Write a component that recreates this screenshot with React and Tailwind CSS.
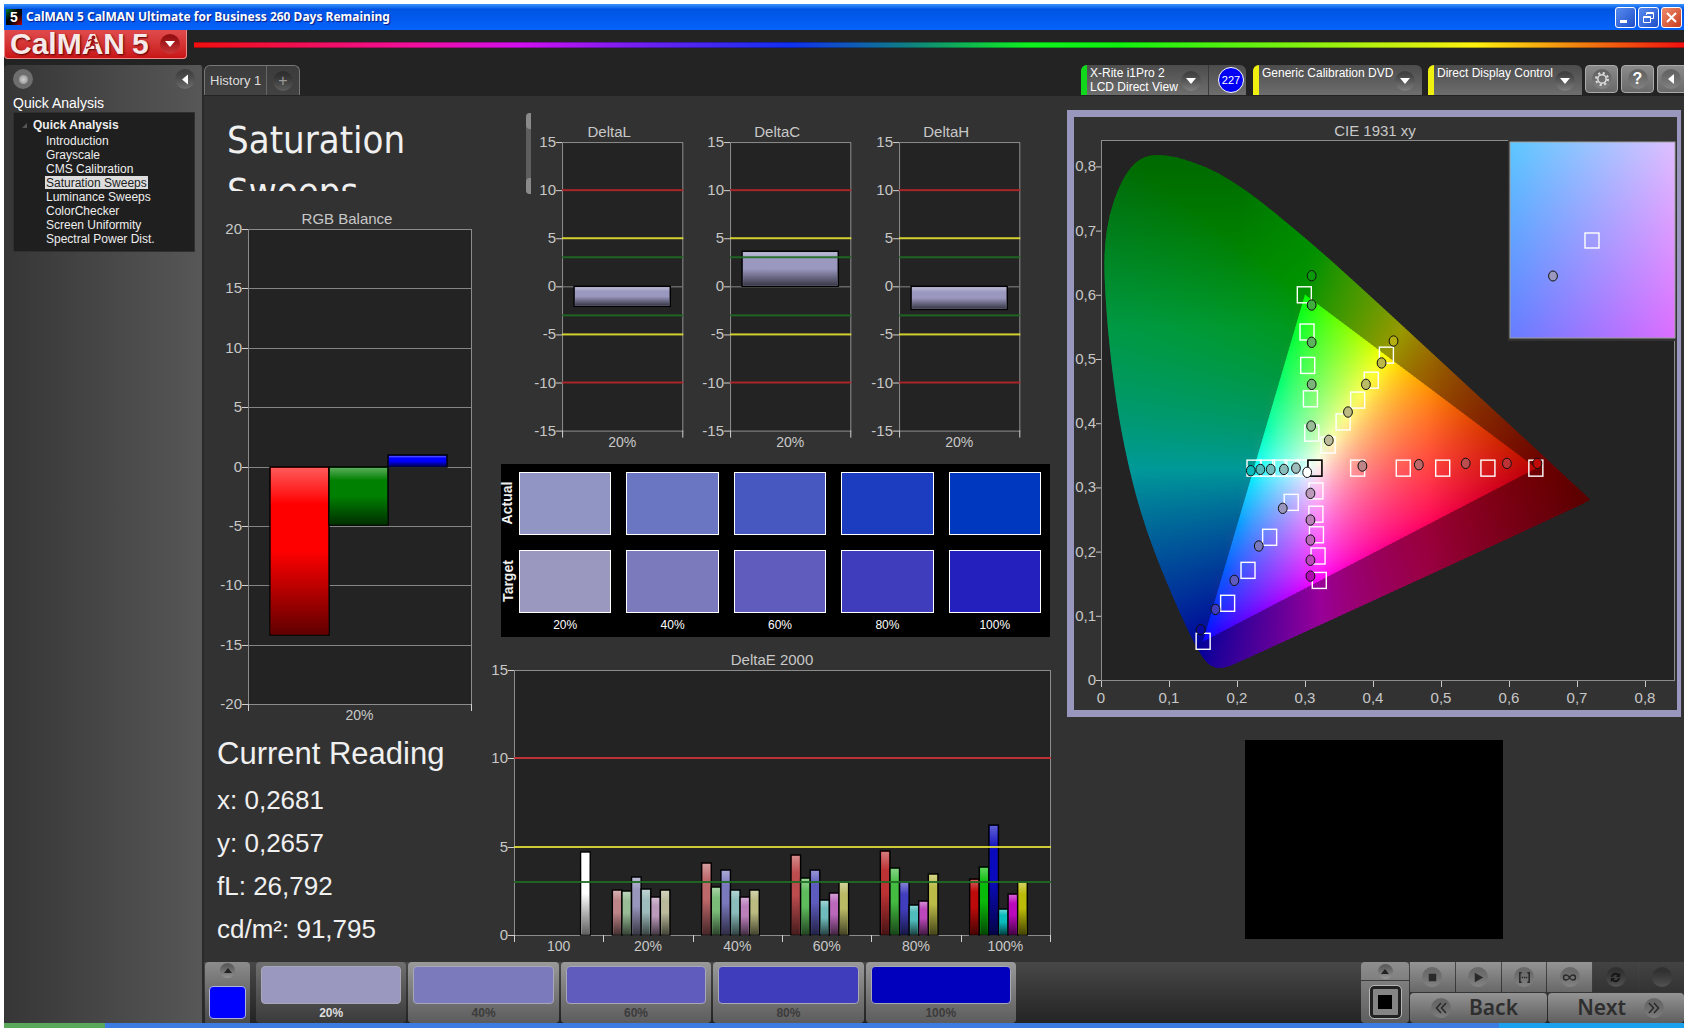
import { useMemo } from 'react'

const steps = ['20%', '40%', '60%', '80%', '100%']
const treeItems = [
  'Introduction', 'Grayscale', 'CMS Calibration', 'Saturation Sweeps',
  'Luminance Sweeps', 'ColorChecker', 'Screen Uniformity', 'Spectral Power Dist.',
]
const actual = ['bg-[#9095c3]', 'bg-[#6b76c3]', 'bg-[#4759c1]', 'bg-[#1c3dc0]', 'bg-[#0038bf]']
const target = ['bg-[#9a98bf]', 'bg-[#7b7abd]', 'bg-[#5f5cbd]', 'bg-[#403dbd]', 'bg-[#2320bd]']
const readings = ['x: 0,2681', 'y: 0,2657', 'fL: 26,792', 'cd/m²: 91,795']

const deltaLimits = [
  [10, '#b8262a', 2], [5, '#e6e233', 2], [3, '#1f6b22', 2],
  [-3, '#1f6b22', 2], [-5, '#e6e233', 2], [-10, '#b8262a', 2],
]

// red, green, blue, cyan, magenta, yellow, white
const deltaE = [
  { label: '100', bars: [null, null, null, null, null, null, [4.7, '#ffffff']] },
  { label: '20%', bars: [[2.54, '#bd8587'], [2.48, '#98bc96'], [3.27, '#9896bd'], [2.63, '#9fbcbc'], [2.16, '#bb9abb'], [2.54, '#bbbb9c']] },
  { label: '40%', bars: [[4.1, '#bd686a'], [2.7, '#7bbc79'], [3.7, '#7b79bd'], [2.54, '#8abcbc'], [2.16, '#bb80bb'], [2.54, '#bbbb82']] },
  { label: '60%', bars: [[4.53, '#bd4c4e'], [3.2, '#5fbc5d'], [3.7, '#5d5bbd'], [2, '#70bcbc'], [2.4, '#bb68bb'], [3, '#bbbb66']] },
  { label: '80%', bars: [[4.76, '#bd3234'], [3.78, '#43bc41'], [3, '#403ebd'], [1.67, '#50bcbc'], [1.9, '#bb48bb'], [3.46, '#bbbb48']] },
  { label: '100%', bars: [[3.16, '#bd0a0a'], [3.87, '#0abc0a'], [6.22, '#0a0abd'], [1.5, '#0abcbc'], [2.3, '#bb0abb'], [3, '#bbbb0a']] },
]

const squares = [
  [0.299, 0.6], [0.303, 0.542], [0.304, 0.49], [0.308, 0.438], [0.31, 0.3845],
  [0.4197, 0.506], [0.3974, 0.467], [0.3774, 0.436], [0.356, 0.402], [0.334, 0.366],
  [0.225, 0.33], [0.245, 0.33], [0.263, 0.33], [0.281, 0.33], [0.297, 0.33],
  [0.3774, 0.33], [0.4445, 0.33], [0.5025, 0.33], [0.569, 0.33], [0.6395, 0.33],
  [0.2797, 0.2767], [0.248, 0.2223], [0.2162, 0.1708], [0.1862, 0.1195], [0.1502, 0.0603],
  [0.316, 0.2945], [0.316, 0.2583], [0.3168, 0.2262], [0.3192, 0.1931], [0.321, 0.1551],
]

const circles = [
  [0.3098, 0.6297, '#0b9a0b'], [0.3098, 0.5841, '#3fae3f'], [0.3098, 0.526, '#5db35d'], [0.3098, 0.4605, '#7bb37b'], [0.309, 0.3956, '#98bc96'],
  [0.4302, 0.528, '#b5b010'], [0.4126, 0.4938, '#bbb848'], [0.3896, 0.4605, '#bbbb66'], [0.3632, 0.4174, '#bbbb82'], [0.335, 0.3733, '#bbbb9c'],
  [0.2203, 0.326, '#0abcbc'], [0.2343, 0.328, '#50bcbc'], [0.2496, 0.328, '#70bcbc'], [0.269, 0.328, '#8abcbc'], [0.2867, 0.33, '#9fbcbc'],
  [0.3844, 0.3333, '#bd8587'], [0.4674, 0.3354, '#bd686a'], [0.5363, 0.3374, '#bd4c4e'], [0.5969, 0.3374, '#bd3234'], [0.6417, 0.3374, '#c00a0a'],
  [0.308, 0.2907, '#bb9abb'], [0.308, 0.2492, '#bb80bb'], [0.308, 0.218, '#bb68bb'], [0.308, 0.1866, '#bb48bb'], [0.308, 0.1618, '#b00ab0'],
  [0.2673, 0.2674, '#9896bd'], [0.232, 0.2087, '#7b79bd'], [0.1961, 0.1552, '#5d5bbd'], [0.1684, 0.11, '#403ebd'], [0.1466, 0.0784, '#0a0aa0'],
  [0.3032, 0.3235, '#ffffff'],
]

const locus = [
  [0.178, 0.018], [0.16, 0.021], [0.145, 0.042], [0.1241, 0.085], [0.0913, 0.165], [0.066, 0.235],
  [0.0454, 0.31], [0.0255, 0.41], [0.012, 0.52], [0.005, 0.62], [0.005, 0.675], [0.012, 0.725],
  [0.027, 0.77], [0.044, 0.8], [0.064, 0.816], [0.087, 0.818], [0.112, 0.814], [0.1547, 0.8],
  [0.1929, 0.777], [0.2296, 0.75], [0.3016, 0.688], [0.3731, 0.62], [0.4441, 0.551], [0.5125, 0.484],
  [0.5752, 0.423], [0.627, 0.372], [0.6658, 0.334], [0.7, 0.3], [0.719, 0.282], [0.719, 0.28], [0.7, 0.27],
  [0.2, 0.026],
]

const px = (x) => 27 + x * 680
const py = (y) => 563 - y * 642
const clamp = (v) => Math.max(0, Math.min(1, v))

const R = [0.64, 0.33]
const G = [0.3, 0.6]
const B = [0.15, 0.06]

// curve through the midpoints of the locus, the points are the handles
function smooth(points) {
  const p = points.map(([x, y]) => [px(x), py(y)])
  const mid = (a, b) => `${((a[0] + b[0]) / 2).toFixed(1)} ${((a[1] + b[1]) / 2).toFixed(1)}`
  const n = p.length
  let d = 'M' + mid(p[n - 1], p[0])
  p.forEach((pt, i) => { d += `Q${pt[0].toFixed(1)} ${pt[1].toFixed(1)} ${mid(pt, p[(i + 1) % n])}` })
  return d + 'Z'
}

// chromaticity to display colour, brightest channel at full
function xyColor(x, y, inside) {
  const X = x / y
  const Z = (1 - x - y) / y
  const lin = [
    3.2406 * X - 1.5372 - 0.4986 * Z,
    -0.9689 * X + 1.8758 + 0.0415 * Z,
    0.0557 * X - 0.204 + 1.057 * Z,
  ].map((v) => Math.max(0, v))
  const max = Math.max(...lin)
  let f = 1 - 0.42 * clamp((x - 0.48) / 0.24)
  if (!inside) f *= 0.6 * (1 - 0.3 * clamp((y - 0.55) / 0.25) * clamp((0.4 - x) / 0.2))
  return lin.map((v) => Math.round(255 * f * Math.pow(v / max, 1 / 1.35)))
}

function Gamut({ id, inside }) {
  const rows = useMemo(() => {
    const list = []
    for (let top = 36; top < 554; top += 2) {
      const y = (563 - top - 1) / 642
      const stops = []
      for (let i = 0; i <= 36; i++) {
        const c = xyColor(0.001 + i * 0.02, y, inside)
        stops.push([i / 36, `rgb(${c[0]},${c[1]},${c[2]})`])
      }
      list.push({ top, stops })
    }
    return list
  }, [inside])
  return (
    <g>
      {rows.map((r) => (
        <g key={r.top}>
          <linearGradient id={id + r.top} gradientUnits="userSpaceOnUse" x1={px(0.001)} x2={px(0.721)} y1="0" y2="0">
            {r.stops.map(([o, c]) => <stop key={o} offset={o} stopColor={c} />)}
          </linearGradient>
          <rect x="27" y={r.top} width="494" height="3" fill={`url(#${id + r.top})`} />
        </g>
      ))}
    </g>
  )
}

function CieChart() {
  const tri = [R, G, B].map(([x, y]) => `${px(x)},${py(y)}`).join(' ')
  const ticks = [0, 1, 2, 3, 4, 5, 6, 7, 8]
  return (
    <svg viewBox="0 0 603 593" className="block w-full" fontFamily="Liberation Sans, Arial, sans-serif" fontSize="15">
      <defs>
        <clipPath id="locus"><path d={smooth(locus)} /></clipPath>
        <clipPath id="tri"><polygon points={tri} /></clipPath>
        <linearGradient id="insetX"><stop offset="0" stopColor="#5cc8ff" /><stop offset="1" stopColor="#dfc0ff" /></linearGradient>
        <linearGradient id="insetX2"><stop offset="0" stopColor="#667cff" /><stop offset="1" stopColor="#dc6cff" /></linearGradient>
        <linearGradient id="fadeY" x2="0" y2="1"><stop offset="0" stopColor="#000" /><stop offset="1" stopColor="#fff" /></linearGradient>
        <mask id="insetMask"><rect x="436" y="25" width="165" height="196" fill="url(#fadeY)" /></mask>
      </defs>
      <text x="301" y="19" textAnchor="middle" fill="#c8c8c8">CIE 1931 xy</text>
      <rect x="27.5" y="23.5" width="573" height="540" fill="#232323" stroke="#8c8c8c" />
      <g clipPath="url(#locus)"><Gamut id="outer" inside={false} /></g>
      <g clipPath="url(#tri)"><Gamut id="inner" inside /></g>
      {ticks.map((t) => (
        <g key={t} fill="#c8c8c8" stroke="none">
          <rect x={px(t / 10)} y="564" width="1" height="6" />
          <rect x="22" y={py(t / 10)} width="5" height="1" />
          <text x={px(t / 10)} y="586" textAnchor="middle">{t ? `0,${t}` : '0'}</text>
          <text x="22" y={py(t / 10) + 5} textAnchor="end">{t ? `0,${t}` : '0'}</text>
        </g>
      ))}
      {squares.map(([x, y], i) => (
        <rect key={i} x={px(x) - 7} y={py(y) - 8} width="14" height="16" fill="none" stroke="#fff" strokeWidth="1.4" />
      ))}
      <rect x={px(0.3146) - 7} y={py(0.33) - 8} width="14" height="16" fill="none" stroke="#000" strokeWidth="1.6" />
      {circles.map(([x, y, c], i) => (
        <ellipse key={i} cx={px(x)} cy={py(y)} rx="4.4" ry="5.2" fill={c} stroke="#101010" />
      ))}
      <rect x="434" y="22" width="169" height="202" fill="#323232" />
      <rect x="436" y="25" width="165" height="196" fill="url(#insetX)" />
      <rect x="436" y="25" width="165" height="196" fill="url(#insetX2)" mask="url(#insetMask)" />
      <rect x="436" y="25" width="165" height="196" fill="none" stroke="#a0a0a0" />
      <rect x="511" y="116" width="14" height="15" fill="none" stroke="#fff" strokeWidth="1.4" />
      <ellipse cx="479" cy="159" rx="4.4" ry="5" fill="#9a98bf" stroke="#101010" />
    </svg>
  )
}

function Shade({ id }) {
  return (
    <linearGradient id={id} x1="0" x2="0" y1="0" y2="1">
      <stop offset="0" stopColor="#fff" stopOpacity="0.35" />
      <stop offset="0.22" stopColor="#fff" stopOpacity="0" />
      <stop offset="0.5" stopColor="#000" stopOpacity="0" />
      <stop offset="1" stopColor="#000" stopOpacity="0.62" />
    </linearGradient>
  )
}

function BarChart({ id, title, titleX, w, h, plot, range, grid, limits = [], groups, barW, offset }) {
  const [x0, x1, y0, y1] = plot
  const [min, max] = range
  const pos = (v) => Math.round(y1 - ((v - min) / (max - min)) * (y1 - y0))
  const ticks = []
  for (let v = min; v <= max; v += 5) ticks.push(v)
  const gw = (x1 - x0) / groups.length
  return (
    <svg viewBox={`0 0 ${w} ${h}`} className="block w-full" fontFamily="Liberation Sans, Arial, sans-serif" fontSize="15">
      <defs><Shade id={id} /></defs>
      <text x={titleX} y={y0 - 5} textAnchor="middle" fill="#c8c8c8">{title}</text>
      <rect x={x0} y={y0} width={x1 - x0} height={y1 - y0} fill="#232323" />
      {ticks.map((v) => (
        <g key={v}>
          {(grid || v === 0) && <rect x={x0} y={pos(v)} width={x1 - x0} height="1" fill="#858585" />}
          <rect x={x0 - 6} y={pos(v)} width="6" height="1" fill="#d0d0d0" />
          <text x={x0 - 6} y={pos(v) + 5} textAnchor="end" fill="#c8c8c8">{v}</text>
        </g>
      ))}
      <rect x={x0 + 0.5} y={y0 + 0.5} width={x1 - x0} height={y1 - y0} fill="none" stroke="#8c8c8c" />
      {groups.map((g, i) => (
        <g key={g.label}>
          {g.bars.map((b, j) => {
            if (!b) return null
            const top = pos(Math.max(b[0], 0))
            const height = pos(Math.min(b[0], 0)) - top
            const x = x0 + i * gw + offset + j * barW
            return (
              <g key={j}>
                <rect x={x} y={top} width={barW} height={height} fill={b[1]} stroke="#000" strokeWidth="1.4" />
                <rect x={x + 1} y={top + 1} width={barW - 2} height={Math.max(height - 2, 1)} fill={`url(#${id})`} />
              </g>
            )
          })}
          <rect x={Math.round(x0 + i * gw)} y={y1} width="1" height="7" fill="#d0d0d0" />
          <text x={x0 + (i + 0.5) * gw} y={y1 + 16} textAnchor="middle" fill="#c8c8c8" fontSize="14">{g.label}</text>
        </g>
      ))}
      <rect x={x1} y={y1} width="1" height="7" fill="#d0d0d0" />
      {limits.map(([v, color, size]) => (
        <rect key={v} x={x0} y={pos(v) - 1} width={x1 - x0 + 1} height={size} fill={color} fillOpacity="0.9" />
      ))}
    </svg>
  )
}

function DeltaChart({ name, value }) {
  return (
    <BarChart id={name} title={name} titleX={78} w={168} h={336} plot={[31, 151, 22, 310]} range={[-15, 15]}
      limits={deltaLimits} groups={[{ label: '20%', bars: [[value, '#9a98bf']] }]} barW={96} offset={12} />
  )
}

function Knob({ children, className = '' }) {
  return (
    <span className={`flex size-5 shrink-0 items-center justify-center rounded-full bg-linear-to-b from-black/25 to-white/15 ${className}`}>
      {children}
    </span>
  )
}

function Down() {
  return <svg viewBox="0 0 10 6" className="h-[6px] w-[10px]"><path d="M0 0h10L5 6z" fill="#fff" /></svg>
}

function DeviceTab({ lines, color, className, children }) {
  return (
    <div className={`flex h-[30px] rounded-t-md bg-linear-to-b from-[#4c4c4c] to-[#6e6e6e] ${className}`}>
      <div className={`w-[6px] shrink-0 rounded-tl-md ${color}`} />
      <button className="flex min-w-0 flex-1 justify-between pr-[7px] pl-[3px] text-left text-xs leading-[14px] text-white">
        <span className="pt-px whitespace-nowrap">{lines.map((l) => <span key={l} className="block">{l}</span>)}</span>
        <Knob className="mt-[6px]"><Down /></Knob>
      </button>
      {children}
    </div>
  )
}

function TitleBar() {
  return (
    <header className="flex h-[26px] items-center bg-linear-to-b from-[#3b93ff] via-[#0054e3] via-20% to-[#0763fb] px-[2px]">
      <div className="mr-1 flex size-4 items-center justify-center bg-linear-to-br from-green-700 via-black to-red-700 text-sm font-bold text-white">5</div>
      <h1 className="flex-1 font-['Noto_Sans','Open_Sans',sans-serif] text-xs font-bold text-white [text-shadow:1px_1px_1px_#0a1883]">
        CalMAN 5 CalMAN Ultimate for Business 260 Days Remaining
      </h1>
      <div className="flex gap-[2px]">
        <button aria-label="Minimize" className="size-[21px] rounded-[3px] border border-white bg-linear-to-br from-[#5a8bf0] to-[#1f4fc8]">
          <svg viewBox="0 0 19 19"><path d="M4 12h7v3H4z" fill="#fff" /></svg>
        </button>
        <button aria-label="Restore" className="size-[21px] rounded-[3px] border border-white bg-linear-to-br from-[#5a8bf0] to-[#1f4fc8]">
          <svg viewBox="0 0 19 19" fill="none" stroke="#fff"><path d="M7.500 7V4.500h7v6H12M7 5.500h7M4.500 8.500h7v6h-7zM4 9.500h7" /></svg>
        </button>
        <button aria-label="Close" className="size-[21px] rounded-[3px] border border-white bg-linear-to-br from-[#ee8a6a] to-[#c8371a]">
          <svg viewBox="0 0 19 19" stroke="#fff" strokeWidth="2"><path d="M5 5l9 9M14 5l-9 9" /></svg>
        </button>
      </div>
    </header>
  )
}

function Brand() {
  return (
    <div className="flex h-[35px] items-start gap-[7px] bg-[#232323]">
      <button className="relative flex h-[29px] w-[183px] shrink-0 items-center rounded-b border border-t-0 border-[#f08a8a] bg-linear-to-b from-[#e04a4c] to-[#c91316] pl-[5px] text-[30px] leading-[26px] font-bold text-[#f6e9e9] [text-shadow:1px_1px_2px_#5a0000]">
        CalMAN<span className="ml-[7px]">5</span>
        <Knob className="ml-[11px] bg-[#c41518]"><Down /></Knob>
        <svg viewBox="0 0 14 16" className="absolute top-[5px] left-[80px] h-4 w-[14px]" fill="none" stroke="#a01418" strokeWidth="1.400">
          <circle cx="8.500" cy="2.500" r="1.300" fill="#a01418" />
          <path d="M3 6l3-1.500 2.500 1L7 9l3 2v4M7 9l-2 3-4 1M8.500 6l1.500 2h3" />
        </svg>
      </button>
      <div className="mt-[12px] h-[6px] flex-1 border-y border-black/30 bg-[linear-gradient(90deg,#f01010_0%,#f010a0_15%,#d010f0_22%,#7020f0_30%,#1030f0_40%,#108080_48%,#10f020_56%,#10f010_62%,#80f010_74%,#fff010_86%,#f08010_93%,#f01010_100%)]" />
    </div>
  )
}

function Sidebar() {
  return (
    <aside className="flex w-[200px] shrink-0 flex-col rounded-t border-r-2 border-[#2a2a2a] bg-[linear-gradient(90deg,#363636,#575757)] pr-[7px] pl-[9px]">
      <div className="flex justify-between pt-[4px]">
        <button aria-label="Record" className="flex size-5 items-center justify-center rounded-full bg-[#6e6e6e]">
          <span className="size-[9px] rounded-full bg-radial from-[#d0d0d0] to-[#888]" />
        </button>
        <button aria-label="Collapse"><Knob>
          <svg viewBox="0 0 6 10" className="h-[11px] w-[6px]"><path d="M6 0v10L0 5z" fill="#fff" /></svg>
        </Knob></button>
      </div>
      <h2 className="mt-[5px] text-sm leading-[18px] text-white">Quick Analysis</h2>
      <nav className="h-[140px] border border-[#303030] bg-[#1f1f1f] pt-[4px] text-xs leading-[14px] text-[#eee]">
        <div className="flex items-center">
          <svg viewBox="0 0 5 5" className="mr-[6px] ml-[8px] size-[5px]"><path d="M5 0v5H0z" fill="#555" /></svg>
          <b className="leading-[17px]">Quick Analysis</b>
        </div>
        <ul className="pl-[31px]">
          {treeItems.map((t) => (
            <li key={t}>
              <a href="#" className={t === 'Saturation Sweeps' ? 'inline-block h-[13px] bg-[#ddd] px-px align-top leading-[14px] text-[#222]' : 'px-px'}>{t}</a>
            </li>
          ))}
        </ul>
      </nav>
    </aside>
  )
}

function Toolbar() {
  const tool = 'flex h-[28px] items-center justify-center rounded border border-[#aaa] bg-linear-to-b from-[#8a8a8a] to-[#6a6a6a]'
  return (
    <div className="flex h-[31px] items-start bg-[#232323]">
      <div className="flex h-[30px] items-stretch rounded-t-md border border-b-0 border-[#777] bg-linear-to-b from-[#3c3c3c] to-[#424242]">
        <button className="w-[62px] border-r border-[#666] pl-[5px] text-left text-[13px] text-[#ddd]">History 1</button>
        <button aria-label="Add history" className="flex w-[32px] items-center justify-center"><Knob className="text-[#999]">+</Knob></button>
      </div>
      <div className="flex-1" />
      <DeviceTab lines={['X-Rite i1Pro 2', 'LCD Direct View']} color="bg-[#12d81c]" className="mr-[7px] w-[165px]">
        <div className="flex w-[38px] items-center justify-end border-l border-[#3a3a3a] pr-[2px]">
          <span className="flex size-[26px] items-center justify-center rounded-full border border-white bg-[#0000f5] text-[11px] text-white">227</span>
        </div>
      </DeviceTab>
      <DeviceTab lines={['Generic Calibration DVD']} color="bg-[#f0f010]" className="mr-[6px] w-[169px]" />
      <DeviceTab lines={['Direct Display Control']} color="bg-[#f0f010]" className="mr-[3px] w-[154px]" />
      <button aria-label="Settings" className={`${tool} mr-[3px] w-[33px]`}><Knob>
        <svg viewBox="0 0 16 16" className="size-4" fill="none" stroke="#ddd">
          <circle cx="8" cy="8" r="4.200" strokeWidth="1.600" />
          <circle cx="8" cy="8" r="6" strokeWidth="2" strokeDasharray="2.200 2.512" />
        </svg>
      </Knob></button>
      <button aria-label="Help" className={`${tool} mr-[3px] w-[33px]`}><Knob className="text-base font-bold text-white">?</Knob></button>
      <button aria-label="Expand" className={`${tool} w-[27px] rounded-r-none border-r-0`}><Knob>
        <svg viewBox="0 0 6 10" className="h-[10px] w-[6px]"><path d="M6 0v10L0 5z" fill="#fff" /></svg>
      </Knob></button>
    </div>
  )
}

function SwatchRow({ label, colors }) {
  return (
    <div className="flex">
      <div className="mr-[5px] flex w-[13px] items-center justify-center">
        <span className="-rotate-90 text-sm font-bold text-[#eee]">{label}</span>
      </div>
      <div className="grid flex-1 grid-cols-5 gap-[15px]">
        {colors.map((c) => <div key={c} className={`h-[63px] border border-white ${c}`} />)}
      </div>
    </div>
  )
}

function Comparison() {
  return (
    <section className="mr-[10px] ml-[11px] flex h-[173px] flex-col gap-[15px] bg-black pt-[8px] pr-[9px]">
      <SwatchRow label="Actual" colors={actual} />
      <div>
        <SwatchRow label="Target" colors={target} />
        <div className="grid grid-cols-5 gap-[15px] pt-[3px] pl-[18px] text-center text-xs leading-[18px] text-white">
          {steps.map((s) => <span key={s}>{s}</span>)}
        </div>
      </div>
    </section>
  )
}

function Workspace() {
  return (
    <main className="grid flex-1 grid-cols-[286fr_570fr_624fr] items-start bg-[#323232]">
      <div>
        <h2 className="mt-[18px] h-[77px] overflow-hidden pl-[23px] font-['DejaVu_Sans_Condensed','DejaVu_Sans',sans-serif] text-[38px] leading-[52px] text-[#f0f0f0]">Saturation<br />Sweeps</h2>
        <div className="mt-[9px]">
          <BarChart id="rgb" title="RGB Balance" titleX={143} w={286} h={528} plot={[44, 267, 29, 504]} range={[-20, 20]} grid
            groups={[{ label: '20%', bars: [[-14.2, '#ff0000'], [-4.9, '#008000'], [1, '#0000ff']] }]} barW={59} offset={22} />
        </div>
        <section className="pl-[13px] text-[#f0f0f0]">
          <h2 className="pt-[4px] text-[31px] leading-[44px]">Current Reading</h2>
          <div className="mt-[3px] text-[26px] leading-[43px]">
            {readings.map((r) => <p key={r}>{r}</p>)}
          </div>
        </section>
      </div>

      <div>
        <div className="flex pr-[24px] pl-[36px]">
          <div className="mt-[17px] flex h-[81px] w-[5px] shrink-0 flex-col justify-between rounded-l bg-[#5e5e5e]">
            <div className="h-[16px] rounded-l bg-[#8a8a8a]" />
            <div className="h-[16px] rounded-l bg-[#8a8a8a]" />
          </div>
          <div className="grid flex-1 grid-cols-3 pt-[24px]">
            <DeltaChart name="DeltaL" value={-2.1} />
            <DeltaChart name="DeltaC" value={3.6} />
            <DeltaChart name="DeltaH" value={-2.4} />
          </div>
        </div>
        <div className="mt-[7px]"><Comparison /></div>
        <div className="mt-[8px]">
          <BarChart id="de" title="DeltaE 2000" titleX={282} w={570} h={314} plot={[24, 560, 25, 290]} range={[0, 15]}
            limits={[[10, '#d03438', 2], [5, '#e0dc3a', 2], [3, '#1f6b22', 2]]} groups={deltaE} barW={9.6} offset={9} />
        </div>
      </div>

      <div className="pr-[3px] pl-[7px]">
        <div className="mt-[14px] border-[7px] border-r-4 border-[#9a97bf]">
          <CieChart />
        </div>
        <div className="mx-auto mt-[23px] h-[199px] w-[42%] bg-black" />
      </div>
    </main>
  )
}

function Chevron({ flip }) {
  return (
    <Knob>
      <svg viewBox="0 0 12 12" className={flip ? 'size-3 rotate-180' : 'size-3'} fill="none" stroke="#2b2b2b" strokeWidth="1.600"><path d="M6 1L1.500 6 6 11M11 1L6.500 6 11 11" /></svg>
    </Knob>
  )
}

function UpKnob() {
  return (
    <span className="flex size-[15px] items-center justify-center rounded-full bg-linear-to-b from-black/35 to-white/20">
      <svg viewBox="0 0 8 5" className="h-[5px] w-2"><path d="M0 5h8L4 0z" fill="#222" /></svg>
    </span>
  )
}

const transport = [
  ['Stop', <path d="M4 4h8v8H4z" />, true],
  ['Play', <path d="M4 3l9 5-9 5z" />, true],
  ['Read step', <path d="M5 3H3v10h2M11 3h2v10h-2M5 8h1.500M7.300 8h1.500M9.500 8H11" fill="none" stroke="currentColor" strokeWidth="1.700" />, true],
  ['Read continuous', <path d="M8 8C6.500 5.500 5.500 5.300 4.300 5.300a2.700 2.700 0 0 0 0 5.400C5.500 10.700 6.500 10.500 8 8s2.500-2.700 3.700-2.700a2.700 2.700 0 0 1 0 5.400C10.500 10.700 9.500 10.500 8 8z" fill="none" stroke="currentColor" strokeWidth="1.500" />, true],
  ['Refresh', <path d="M3 7.500a5 5 0 0 1 8.500-3L13 3v4.500H8.500L10 6a3 3 0 0 0-5 1.500zM13 8.500a5 5 0 0 1-8.500 3L3 13V8.500h4.500L6 10a3 3 0 0 0 5-1.500z" fill="#161616" />, false],
  ['Blank', null, false],
]

function BottomBar() {
  return (
    <footer className="flex h-[61px] items-stretch bg-linear-to-b from-[#484848] to-[#242424] pl-px">
      <div className="flex w-[45px] shrink-0 flex-col items-center rounded-t bg-linear-to-b from-[#8c8c8c] to-[#4a4a4a] pt-px">
        <UpKnob />
        <button aria-label="Current color" className="mt-[8px] h-[33px] w-[37px] rounded border border-[#b0b0e0] bg-[#0000ff]" />
      </div>
      <div className="mr-4 ml-[6px] grid max-w-[760px] flex-1 grid-cols-5 gap-[2px]">
        {steps.map((s, i) => (
          <button key={s} className={`flex flex-col rounded px-[5px] pt-[4px] text-center text-xs font-bold ${i === 0 ? 'bg-linear-to-b from-[#707070] to-[#3a3a3a] text-[#ddd]' : 'bg-linear-to-b from-[#9a9a9a] to-[#5c5c5c] text-[#3c3c3c]'}`}>
            <span className={`block h-[38px] w-full rounded border border-[#a8a8b8] ${i === 4 ? 'bg-[#0000bd]' : target[i]}`} />
            <span className="block w-full leading-[19px]">{s}</span>
          </button>
        ))}
      </div>
      <div className="ml-auto flex shrink-0">
        <div className="flex w-[48px] flex-col items-center rounded bg-linear-to-b from-[#8e8e8e] to-[#5e5e5e]">
          <button aria-label="Pattern menu" className="flex h-[19px] w-full items-center justify-center border-b border-[#3c3c3c]"><UpKnob /></button>
          <button aria-label="Pattern" className="mt-[5px] flex h-[32px] w-[31px] items-center justify-center rounded border-[3px] border-[#222] bg-[#858585] outline outline-[#b5b5b5]">
            <span className="size-[14px] bg-black" />
          </button>
        </div>
        <div className="ml-px flex w-[274px] flex-col gap-px">
          <div className="grid grid-cols-6 gap-px">
            {transport.map(([name, icon, on]) => (
              <button key={name} aria-label={name} className={`flex h-[30px] items-center justify-center text-[#2a2a2a] ${on ? 'bg-linear-to-b from-[#949494] to-[#686868]' : 'bg-linear-to-b from-[#434343] to-[#333]'}`}>
                <Knob><svg viewBox="0 0 16 16" className="size-[15px]" fill="currentColor">{icon}</svg></Knob>
              </button>
            ))}
          </div>
          <div className="grid grid-cols-2 gap-px font-['Noto_Sans','Open_Sans',sans-serif] text-[21px] font-semibold text-[#2e2e2e]">
            <button className="flex h-[30px] items-center gap-[18px] rounded bg-linear-to-b from-[#949494] to-[#5e5e5e] pl-[21px]"><Chevron />Back</button>
            <button className="flex h-[30px] items-center justify-end gap-[18px] rounded bg-linear-to-b from-[#949494] to-[#5e5e5e] pr-[20px]">Next<Chevron flip /></button>
          </div>
        </div>
      </div>
    </footer>
  )
}

export default function App() {
  return (
    <div className="flex min-h-screen flex-col bg-white pt-1 font-['Liberation_Sans',Arial,sans-serif]">
      <div className="flex flex-1 flex-col px-1">
        <TitleBar />
        <div className="flex flex-1 flex-col bg-[#232323]">
          <Brand />
          <div className="flex flex-1">
            <Sidebar />
            <div className="flex min-w-0 flex-1 flex-col">
              <Toolbar />
              <Workspace />
              <BottomBar />
            </div>
          </div>
        </div>
      </div>
      <div className="flex h-[5px] px-1">
        <div className="w-[6%] bg-[#5aa85a]" />
        <div className="flex-1 bg-[#3b7be2]" />
        <div className="w-[11%] bg-[#1ba0ee]" />
      </div>
    </div>
  )
}
